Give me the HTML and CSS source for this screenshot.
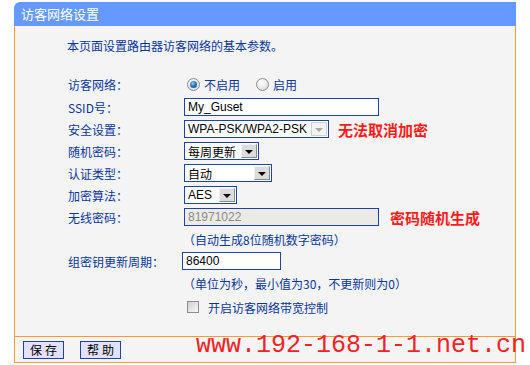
FILE: index.html
```html
<!DOCTYPE html>
<html lang="zh-CN">
<head>
<meta charset="utf-8">
<title>访客网络设置</title>
<link rel="stylesheet" href="styles.css">
</head>
<body>
<div class="panel">
  <div class="title">访客网络设置</div>
  <div class="content">
    <p class="intro">本页面设置路由器访客网络的基本参数。</p>
    <div class="form">
      <div class="row first">
        <span class="label">访客网络：</span>
        <span class="ctrl">
          <span class="radio on"></span><span class="rtext">不启用</span>
          <span class="radio"></span><span class="rtext">启用</span>
        </span>
      </div>
      <div class="row">
        <span class="label">SSID号：</span>
        <span class="ctrl"><span class="input wide">My_Guset</span></span>
      </div>
      <div class="row">
        <span class="label">安全设置：</span>
        <span class="ctrl">
          <span class="select w-wpa disabled"><span class="val">WPA-PSK/WPA2-PSK</span><span class="btn"><i class="arrow"></i></span></span>
          <span class="note n1">无法取消加密</span>
        </span>
      </div>
      <div class="row">
        <span class="label">随机密码：</span>
        <span class="ctrl"><span class="select w-week"><span class="val">每周更新</span><span class="btn"><i class="arrow"></i></span></span></span>
      </div>
      <div class="row">
        <span class="label">认证类型：</span>
        <span class="ctrl"><span class="select w-auto"><span class="val">自动</span><span class="btn"><i class="arrow"></i></span></span></span>
      </div>
      <div class="row">
        <span class="label">加密算法：</span>
        <span class="ctrl"><span class="select w-aes"><span class="val">AES</span><span class="btn"><i class="arrow"></i></span></span></span>
      </div>
      <div class="row">
        <span class="label">无线密码：</span>
        <span class="ctrl">
          <span class="input wide dis">81971022</span>
          <span class="note n2">密码随机生成</span>
        </span>
      </div>
      <div class="row">
        <span class="label"></span>
        <span class="ctrl hint">（自动生成8位随机数字密码）</span>
      </div>
      <div class="row">
        <span class="label">组密钥更新周期：</span>
        <span class="ctrl shift"><span class="input short">86400</span></span>
      </div>
      <div class="row">
        <span class="label"></span>
        <span class="ctrl hint">（单位为秒，最小值为30，不更新则为0）</span>
      </div>
      <div class="row last">
        <span class="label"></span>
        <span class="ctrl"><span class="check"></span><span class="ctext">开启访客网络带宽控制</span></span>
      </div>
    </div>
  </div>
  <div class="footer">
    <span class="button">保存</span>
    <span class="button">帮助</span>
  </div>
  <div class="watermark">www.192-168-1-1.net.cn</div>
</div>
</body>
</html>
```
FILE: styles.css
```css
body {
  margin: 0;
  background: #ffffff;
  font-family: "Noto Sans CJK SC", "Liberation Sans", sans-serif;
  font-size: 12px;
}

.panel {
  position: relative;
  margin: 2px 0 0 14px;
  width: 502px;
}

.title {
  height: 24px;
  line-height: 24px;
  background: #6699ff;
  color: #ffffff;
  font-size: 13px;
  padding-left: 7px;
  border-top-left-radius: 6px;
}

.content {
  box-sizing: border-box;
  height: 310px;
  background: #f4f4f4;
  border-left: 1px solid #ff9933;
  border-right: 1px solid #ff9933;
  padding-top: 12px;
  color: #0a3699;
}

.intro {
  margin: 0 0 19px 52px;
  line-height: 16px;
}

.form {
  display: flex;
  flex-direction: column;
}

.row {
  display: flex;
  align-items: center;
  height: 22px;
}

.row.first { height: 23px; }
.row.last { height: 24px; padding-top: 1px; }

.label {
  width: 116px;
  padding-left: 53px;
  flex-shrink: 0;
}

.ctrl {
  display: flex;
  align-items: center;
}

.ctrl.shift { margin-left: -2px; }

.radio {
  box-sizing: border-box;
  width: 13px;
  height: 13px;
  border-radius: 50%;
  border: 1px solid #8c8c8c;
  background: radial-gradient(circle at 40% 35%, #ffffff 0%, #e6e6e6 60%, #c8c8c8 100%);
  margin-left: 3px;
  position: relative;
}

.radio.on::after {
  content: "";
  position: absolute;
  left: 2px;
  top: 2px;
  width: 7px;
  height: 7px;
  border-radius: 50%;
  background: radial-gradient(circle at 40% 35%, #8fd0ff 0%, #2a78c2 45%, #0d3f7a 100%);
}

.rtext { margin-left: 4px; margin-right: 13px; }

.input, .select {
  box-sizing: border-box;
  height: 18px;
  border: 1px solid #1d43a4;
  background: #ffffff;
  color: #000000;
  font-family: "Liberation Sans", "Noto Sans CJK SC", sans-serif;
  font-size: 12px;
  display: flex;
  align-items: center;
}

.input { padding-left: 3px; }
.input.wide { width: 195px; }
.input.short { width: 99px; }
.input.dis { background: #ebeae4; color: #8a8a8a; }

.select .val {
  flex: 1;
  padding-left: 3px;
  white-space: nowrap;
  overflow: hidden;
}

.select .btn {
  box-sizing: border-box;
  width: 16px;
  height: 14px;
  margin-right: 1px;
  border: 1px solid #8a8a8a;
  border-top-color: #f0f0f0;
  border-left-color: #f0f0f0;
  background: #dcdcdc;
  display: flex;
  align-items: center;
  justify-content: center;
}

.arrow {
  width: 0;
  height: 0;
  border-left: 4px solid transparent;
  border-right: 4px solid transparent;
  border-top: 4px solid #000000;
  margin-top: 1px;
}

.select.disabled .btn { background: #f2f2f2; border-color: #d0d0d0; }
.select.disabled .arrow { border-top-color: #a8a8a8; }

.w-wpa { width: 145px; }
.w-week { width: 75px; }
.w-auto { width: 88px; }
.w-aes { width: 53px; }

.note {
  color: #ff1a1a;
  font-weight: bold;
  font-size: 15px;
}
.note.n1 { margin-left: 9px; }
.note.n2 { margin-left: 11px; }

.hint { margin-left: -1px; }

.check {
  box-sizing: border-box;
  width: 12px;
  height: 12px;
  margin-left: 3px;
  border: 1px solid #8c8c8c;
  background: linear-gradient(135deg, #d0d0d0, #f8f8f8);
}

.ctext { margin-left: 9px; }

.footer {
  box-sizing: border-box;
  height: 27px;
  border: 1px solid #ff9933;
  background: #f4f4f4;
  display: flex;
  align-items: center;
  gap: 16px;
  padding-left: 8px;
}

.button {
  box-sizing: border-box;
  width: 41px;
  height: 18px;
  border: 1px solid #1d43a4;
  background: #e2e2ff;
  color: #000000;
  letter-spacing: 3px;
  display: flex;
  align-items: center;
  justify-content: center;
  padding-left: 3px;
}

.watermark {
  position: absolute;
  left: 182px;
  top: 329px;
  font-family: "Liberation Mono", monospace;
  font-size: 25px;
  color: #f02424;
  white-space: nowrap;
}
```
